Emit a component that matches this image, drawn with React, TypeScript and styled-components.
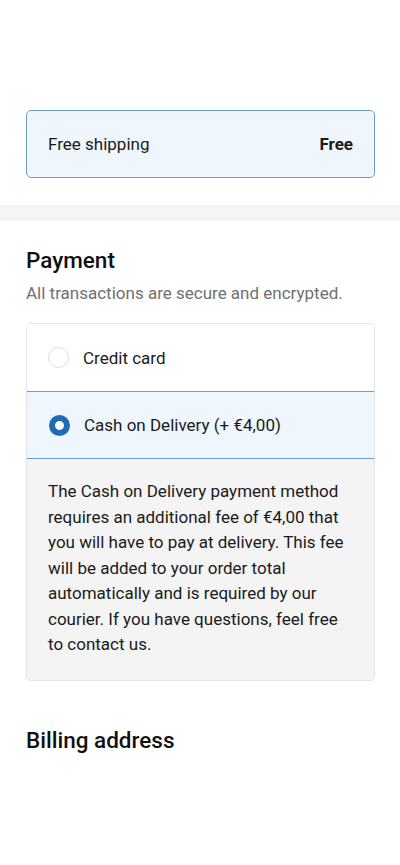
import React from "react";
import styled, { createGlobalStyle } from "styled-components";

const Global = createGlobalStyle`
  html, body { margin: 0; padding: 0; background: #ffffff; }
  body { font-family: Roboto, "Liberation Sans", Arial, sans-serif; color: #1a1a1a; -webkit-font-smoothing: antialiased; }
`;

const Page = styled.div`
  width: 400px;
  min-height: 865px;
  background: #ffffff;
`;

const ShippingSection = styled.section`
  padding: 110px 25px 27px 26px;
`;

const ShippingBox = styled.div`
  height: 68px;
  box-sizing: border-box;
  display: flex;
  align-items: center;
  justify-content: space-between;
  padding: 0 21px 0 21px;
  background: #f0f6fe;
  border: 1px solid #6d9dcf;
  border-radius: 5px;
  font-size: 17px;
`;

const Price = styled.span`
  font-weight: 700;
`;

const Band = styled.div`
  height: 16px;
  background: #f5f5f5;
`;

const PaymentSection = styled.section`
  padding: 25px 25px 0 26px;
`;

const Heading = styled.h2`
  margin: 0;
  font-size: 22.5px;
  line-height: 28px;
  font-weight: 500;
  color: #111;
`;

const Sub = styled.p`
  margin: 9px 0 0;
  font-size: 17px;
  line-height: 20px;
  color: #707070;
`;

const Options = styled.div`
  margin-top: 20px;
  border: 1px solid #e3e3e3;
  border-radius: 5px;
  overflow: hidden;
`;

const Option = styled.label<{ $selected?: boolean }>`
  height: ${(p) => (p.$selected ? "68px" : "67px")};
  box-sizing: border-box;
  display: flex;
  align-items: center;
  gap: 14px;
  padding: 0 0 0 ${(p) => (p.$selected ? "22px" : "21px")};
  font-size: 17px;
  background: ${(p) => (p.$selected ? "#f0f6fe" : "#ffffff")};
  border: ${(p) => (p.$selected ? "1px solid #6d9dcf" : "none")};
  margin: ${(p) => (p.$selected ? "0 -1px" : "0")};
`;

const Radio = styled.span<{ $checked?: boolean }>`
  width: 21px;
  height: 21px;
  box-sizing: border-box;
  border-radius: 50%;
  flex: none;
  background: #fff;
  border: ${(p) => (p.$checked ? "6.5px solid #1f6cb2" : "1px solid #dcdcdc")};
`;

const Description = styled.div`
  background: #f4f4f4;
  padding: 20px 22px 22px 21px;
  font-size: 17px;
  line-height: 25.5px;
  color: #1a1a1a;
`;

const BillingSection = styled.section`
  padding: 45px 26px 0 26px;
`;

export default function App() {
  return (
    <Page>
      <Global />
      <ShippingSection>
        <ShippingBox>
          <span>Free shipping</span>
          <Price>Free</Price>
        </ShippingBox>
      </ShippingSection>
      <Band />
      <PaymentSection>
        <Heading>Payment</Heading>
        <Sub>All transactions are secure and encrypted.</Sub>
        <Options>
          <Option>
            <Radio />
            <span>Credit card</span>
          </Option>
          <Option $selected>
            <Radio $checked />
            <span>Cash on Delivery (+ €4,00)</span>
          </Option>
          <Description>
            The Cash on Delivery payment method requires an additional fee of €4,00 that you will have to pay at delivery. This fee will be added to your order total automatically and is required by our courier. If you have questions, feel free to contact us.
          </Description>
        </Options>
      </PaymentSection>
      <BillingSection>
        <Heading>Billing address</Heading>
      </BillingSection>
    </Page>
  );
}
